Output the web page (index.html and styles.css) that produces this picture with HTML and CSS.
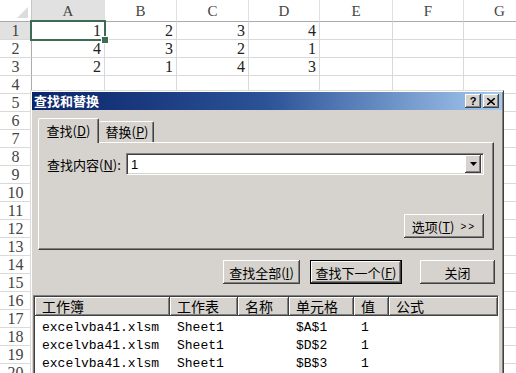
FILE: index.html
```html
<!DOCTYPE html>
<html>
<head>
<meta charset="utf-8">
<link rel="stylesheet" href="styles.css">
</head>
<body>
<div class="sheet">
  <div class="corner"><span class="tri"></span></div>
  <div class="ch sel">A</div><div class="ch">B</div><div class="ch">C</div><div class="ch">D</div><div class="ch">E</div><div class="ch">F</div><div class="ch">G</div>

  <div class="rh sel">1</div><div class="c n a1">1</div><div class="c n">2</div><div class="c n">3</div><div class="c n">4</div><div class="c"></div><div class="c"></div><div class="c"></div>
  <div class="rh">2</div><div class="c n">4</div><div class="c n">3</div><div class="c n">2</div><div class="c n">1</div><div class="c"></div><div class="c"></div><div class="c"></div>
  <div class="rh">3</div><div class="c n">2</div><div class="c n">1</div><div class="c n">4</div><div class="c n">3</div><div class="c"></div><div class="c"></div><div class="c"></div>
  <div class="rh">4</div><div class="c"></div><div class="c"></div><div class="c"></div><div class="c"></div><div class="c"></div><div class="c"></div><div class="c"></div>
  <div class="rh">5</div><div class="c"></div><div class="c"></div><div class="c"></div><div class="c"></div><div class="c"></div><div class="c"></div><div class="c"></div>
  <div class="rh">6</div><div class="c"></div><div class="c"></div><div class="c"></div><div class="c"></div><div class="c"></div><div class="c"></div><div class="c"></div>
  <div class="rh">7</div><div class="c"></div><div class="c"></div><div class="c"></div><div class="c"></div><div class="c"></div><div class="c"></div><div class="c"></div>
  <div class="rh">8</div><div class="c"></div><div class="c"></div><div class="c"></div><div class="c"></div><div class="c"></div><div class="c"></div><div class="c"></div>
  <div class="rh">9</div><div class="c"></div><div class="c"></div><div class="c"></div><div class="c"></div><div class="c"></div><div class="c"></div><div class="c"></div>
  <div class="rh">10</div><div class="c"></div><div class="c"></div><div class="c"></div><div class="c"></div><div class="c"></div><div class="c"></div><div class="c"></div>
  <div class="rh">11</div><div class="c"></div><div class="c"></div><div class="c"></div><div class="c"></div><div class="c"></div><div class="c"></div><div class="c"></div>
  <div class="rh">12</div><div class="c"></div><div class="c"></div><div class="c"></div><div class="c"></div><div class="c"></div><div class="c"></div><div class="c"></div>
  <div class="rh">13</div><div class="c"></div><div class="c"></div><div class="c"></div><div class="c"></div><div class="c"></div><div class="c"></div><div class="c"></div>
  <div class="rh">14</div><div class="c"></div><div class="c"></div><div class="c"></div><div class="c"></div><div class="c"></div><div class="c"></div><div class="c"></div>
  <div class="rh">15</div><div class="c"></div><div class="c"></div><div class="c"></div><div class="c"></div><div class="c"></div><div class="c"></div><div class="c"></div>
  <div class="rh">16</div><div class="c"></div><div class="c"></div><div class="c"></div><div class="c"></div><div class="c"></div><div class="c"></div><div class="c"></div>
  <div class="rh">17</div><div class="c"></div><div class="c"></div><div class="c"></div><div class="c"></div><div class="c"></div><div class="c"></div><div class="c"></div>
  <div class="rh">18</div><div class="c"></div><div class="c"></div><div class="c"></div><div class="c"></div><div class="c"></div><div class="c"></div><div class="c"></div>
  <div class="rh">19</div><div class="c"></div><div class="c"></div><div class="c"></div><div class="c"></div><div class="c"></div><div class="c"></div><div class="c"></div>
  <div class="rh">20</div><div class="c"></div><div class="c"></div><div class="c"></div><div class="c"></div><div class="c"></div><div class="c"></div><div class="c"></div>
</div>

<div class="dialog">
  <div class="titlebar">
    <span class="title">查找和替换</span>
    <span class="tbtns"><span class="tb">?</span><span class="tb x">
      <svg width="8" height="7" viewBox="0 0 8 7"><path d="M0 0 L8 7 M8 0 L0 7" stroke="#000" stroke-width="1.6"/></svg>
    </span></span>
  </div>
  <div class="body">
    <div class="tabs">
      <div class="tab active">查找(<u>D</u>)</div>
      <div class="tab">替换(<u>P</u>)</div>
    </div>
    <div class="panel">
      <div class="findrow">
        <span class="label">查找内容(<u>N</u>):</span>
        <div class="combo">
          <span class="val">1</span>
          <span class="dd"><svg width="7" height="4" viewBox="0 0 7 4"><path d="M0 0 H7 L3.5 4 Z" fill="#000"/></svg></span>
        </div>
      </div>
      <div class="optrow"><span class="btn opt">选项(<u>T</u>) <span class="gt">&gt;&gt;</span></span></div>
    </div>
    <div class="btnrow">
      <span class="btn b1">查找全部(<u>I</u>)</span>
      <span class="btn b2 default">查找下一个(<u>F</u>)</span>
      <span class="btn b3">关闭</span>
    </div>
  </div>
  <div class="results">
    <div class="rhead">
      <span class="hc w1">工作簿</span><span class="hc w2">工作表</span><span class="hc w3">名称</span><span class="hc w4">单元格</span><span class="hc w5">值</span><span class="hc w6">公式</span>
    </div>
    <div class="rrows">
      <div class="rr"><span class="w1">excelvba41.xlsm</span><span class="w2">Sheet1</span><span class="w3"></span><span class="w4">$A$1</span><span class="w5">1</span></div>
      <div class="rr"><span class="w1">excelvba41.xlsm</span><span class="w2">Sheet1</span><span class="w3"></span><span class="w4">$D$2</span><span class="w5">1</span></div>
      <div class="rr"><span class="w1">excelvba41.xlsm</span><span class="w2">Sheet1</span><span class="w3"></span><span class="w4">$B$3</span><span class="w5">1</span></div>
    </div>
  </div>
</div>
</body>
</html>
```

FILE: styles.css
```css
html, body {
  margin: 0;
  padding: 0;
  background: #fff;
  overflow: hidden;
}
body {
  width: 516px;
  height: 373px;
  position: relative;
}

/* Spreadsheet */
.sheet {
  display: grid;
  grid-template-columns: 32px 73px 72px 72px 71px 73px 71px 72px;
  grid-template-rows: 22px;
  grid-auto-rows: 18px;
  width: 536px;
  font-family: "Liberation Serif", "DejaVu Serif", serif;
  color: #222;
}
.sheet > div {
  box-sizing: border-box;
  border-right: 1px solid #d9d9d9;
  border-bottom: 1px solid #d9d9d9;
}
.corner {
  position: relative;
  border-right-color: #c6c6c6 !important;
  border-bottom-color: #ababab !important;
  background: #fff;
}
.tri {
  position: absolute;
  right: 3px;
  bottom: 3px;
  width: 0;
  height: 0;
  border-left: 11px solid transparent;
  border-bottom: 11px solid #dcdcdc;
}
.ch {
  background: #fff;
  border-bottom-color: #ababab !important;
  border-right-color: #e0e0e0 !important;
  text-align: center;
  font-size: 15px;
  line-height: 22px;
  color: #444;
}
.ch.sel { background: #e1e1e1; }
.rh {
  background: #fff;
  border-right-color: #ababab !important;
  text-align: center;
  font-size: 16px;
  line-height: 18px;
  color: #444;
}
.rh.sel { background: #e1e1e1; }
.c {
  background: #fff;
}
.n {
  text-align: right;
  font-size: 16px;
  line-height: 18px;
  padding-right: 3px;
}
.a1 { position: relative; }
.a1::after {
  content: "";
  position: absolute;
  left: -2px;
  top: -2px;
  right: -2px;
  bottom: -2px;
  border: 2px solid #3f6b54;
}
.a1::before {
  content: "";
  position: absolute;
  right: -5px;
  bottom: -5px;
  width: 6px;
  height: 6px;
  background: #3f6b54;
  border: 1px solid #fff;
  z-index: 2;
}

/* Dialog */
.dialog {
  position: absolute;
  left: 30px;
  top: 90px;
  width: 474px;
  height: 300px;
  box-sizing: border-box;
  background: #d6d3ce;
  border: 1px solid;
  border-color: #dedbd6 #404040 #404040 #dedbd6;
  box-shadow: inset 1px 1px #ffffff, inset -1px -1px #808080;
  padding: 1px;
  font-family: "Noto Sans CJK SC", "Noto Sans", sans-serif;
  font-size: 13px;
  color: #000;
}
.titlebar {
  height: 18px;
  display: flex;
  align-items: center;
  justify-content: space-between;
  background: linear-gradient(to right, #0a246a 0%, #2c5298 50%, #a6caf0 100%);
}
.title {
  color: #fff;
  font-weight: bold;
  font-size: 13px;
  line-height: 18px;
  padding-left: 2px;
}
.tbtns {
  display: flex;
  gap: 2px;
  margin-right: 3px;
}
.tb {
  width: 16px;
  height: 14px;
  box-sizing: border-box;
  background: #d6d3ce;
  box-shadow: inset -1px -1px #404040, inset 1px 1px #fff, inset -2px -2px #808080;
  display: flex;
  align-items: center;
  justify-content: center;
  font-family: "Liberation Sans", sans-serif;
  font-weight: bold;
  font-size: 11px;
  line-height: 14px;
}
.body {
  padding: 8px 8px 0 6px;
}
.tabs {
  display: flex;
  align-items: flex-end;
  height: 24px;
  position: relative;
  z-index: 2;
}
.tab {
  box-sizing: border-box;
  height: 21px;
  width: 55px;
  border-top: 1px solid #fff;
  border-right: 1px solid #404040;
  box-shadow: inset -1px 0 #808080;
  border-radius: 2px 2px 0 0;
  text-align: center;
  line-height: 20px;
  padding-left: 2px;
}
.tab.active {
  height: 25px;
  width: 61px;
  border-left: 1px solid #fff;
  background: #d6d3ce;
  margin-bottom: -1px;
  line-height: 23px;
  padding-left: 0;
}
.panel {
  box-sizing: border-box;
  height: 108px;
  border: 1px solid;
  border-color: #fff #404040 #404040 #fff;
  box-shadow: inset -1px -1px #808080;
  display: flex;
  flex-direction: column;
  padding: 10px 9px 11px 8px;
}
.findrow {
  display: flex;
  align-items: center;
  height: 22px;
}
.label {
  width: 79px;
  flex: none;
}
.combo {
  flex: 1;
  height: 22px;
  box-sizing: border-box;
  background: #fff;
  border: 1px solid;
  border-color: #808080 #fff #fff #808080;
  box-shadow: inset 1px 1px #404040, inset -1px -1px #d6d3ce;
  display: flex;
  align-items: center;
  justify-content: space-between;
  padding: 2px;
}
.val {
  font-family: "Liberation Sans", sans-serif;
  font-size: 13px;
  padding-left: 2px;
}
.dd {
  width: 16px;
  height: 18px;
  box-sizing: border-box;
  background: #d6d3ce;
  box-shadow: inset -1px -1px #404040, inset 1px 1px #fff, inset -2px -2px #808080;
  display: flex;
  align-items: center;
  justify-content: center;
}
.optrow {
  margin-top: auto;
  display: flex;
  justify-content: flex-end;
}
.btn {
  box-sizing: border-box;
  height: 24px;
  display: inline-flex;
  align-items: center;
  justify-content: center;
  background: #d6d3ce;
  box-shadow: inset -1px -1px #404040, inset 1px 1px #fff, inset -2px -2px #808080;
  font-size: 13px;
}
.opt { width: 80px; }
.gt {
  font-family: "Liberation Sans", sans-serif;
  font-size: 10px;
  letter-spacing: 2px;
  margin-left: 6px;
}
.btnrow {
  display: flex;
  justify-content: flex-end;
  margin-top: 10px;
  margin-right: -1px;
}
.b1 { width: 77px; margin-right: 10px; }
.b2 { width: 92px; margin-right: 18px; }
.b3 { width: 75px; }
.default {
  border: 1px solid #000;
}

/* Results */
.results {
  margin: 11px 0 0 1px;
  width: 466px;
  height: 120px;
  box-sizing: border-box;
  background: #fff;
  border: 1px solid;
  border-color: #808080 #fff #fff #808080;
  box-shadow: inset 1px 1px #404040;
  padding: 1px 0 0 1px;
}
.rhead {
  display: flex;
  height: 19px;
}
.hc {
  box-sizing: border-box;
  height: 19px;
  background: #d6d3ce;
  box-shadow: inset -1px -1px #404040, inset 1px 1px #fff, inset -2px -2px #808080;
  font-size: 14px;
  line-height: 19px;
  padding-left: 7px;
  flex: none;
}
.w1 { width: 135px; }
.w2 { width: 68px; }
.w3 { width: 51px; }
.w4 { width: 65px; }
.w5 { width: 35px; }
.w6 { flex: 1 !important; }
.rrows {
  padding-top: 3px;
}
.rr {
  display: flex;
  height: 18px;
  font-family: "Liberation Mono", "DejaVu Sans Mono", monospace;
  font-size: 13px;
  line-height: 18px;
}
.rr span {
  flex: none;
  box-sizing: border-box;
  padding-left: 7px;
}
```
